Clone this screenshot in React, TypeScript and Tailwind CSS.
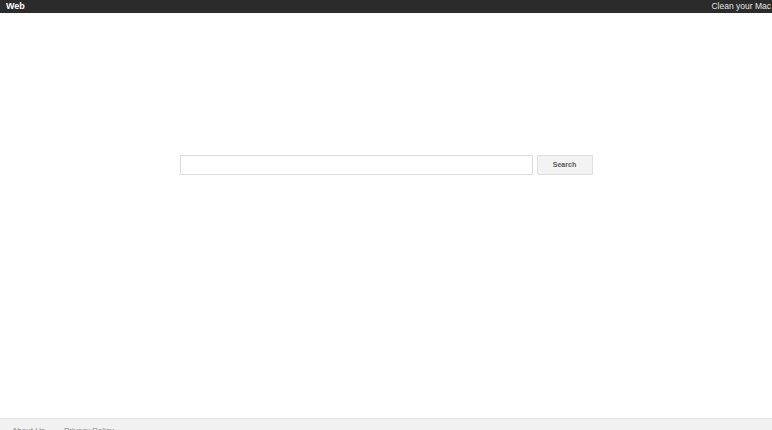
export default function App() {
  return (
    <div className="flex h-[430px] w-full flex-col overflow-hidden bg-white font-['Liberation_Sans',Arial,sans-serif]">
      <div className="flex h-[13px] shrink-0 items-center justify-between bg-[#2b2b2b] pl-[6px] pr-[1px]">
        <span className="text-[9px] font-bold leading-none text-white">Web</span>
        <span className="text-[8.5px] leading-none text-[#e6e6e6]">Clean your Mac</span>
      </div>

      <div className="flex flex-1 flex-col items-center">
        <div className="mt-[142px] flex items-center gap-[4px]">
          <input
            type="text"
            className="h-[20px] w-[353px] border border-[#dcdcdc] bg-white px-1 text-[10px] shadow-[inset_0_0_1px_#e8e8e8] outline-none"
          />
          <button className="h-[20px] w-[56px] border border-[#e0e0e0] bg-[#f3f3f3] text-[7px] font-bold text-[#555]">
            Search
          </button>
        </div>
      </div>

      <div className="h-[12px] shrink-0 border-t border-[#e2e2e2] bg-[#f1f1f1]">
        <div className="flex gap-[19px] pl-[12px] pt-[8px] text-[8px] leading-none text-[#888]">
          <span>About Us</span>
          <span>Privacy Policy</span>
        </div>
      </div>
    </div>
  )
}
